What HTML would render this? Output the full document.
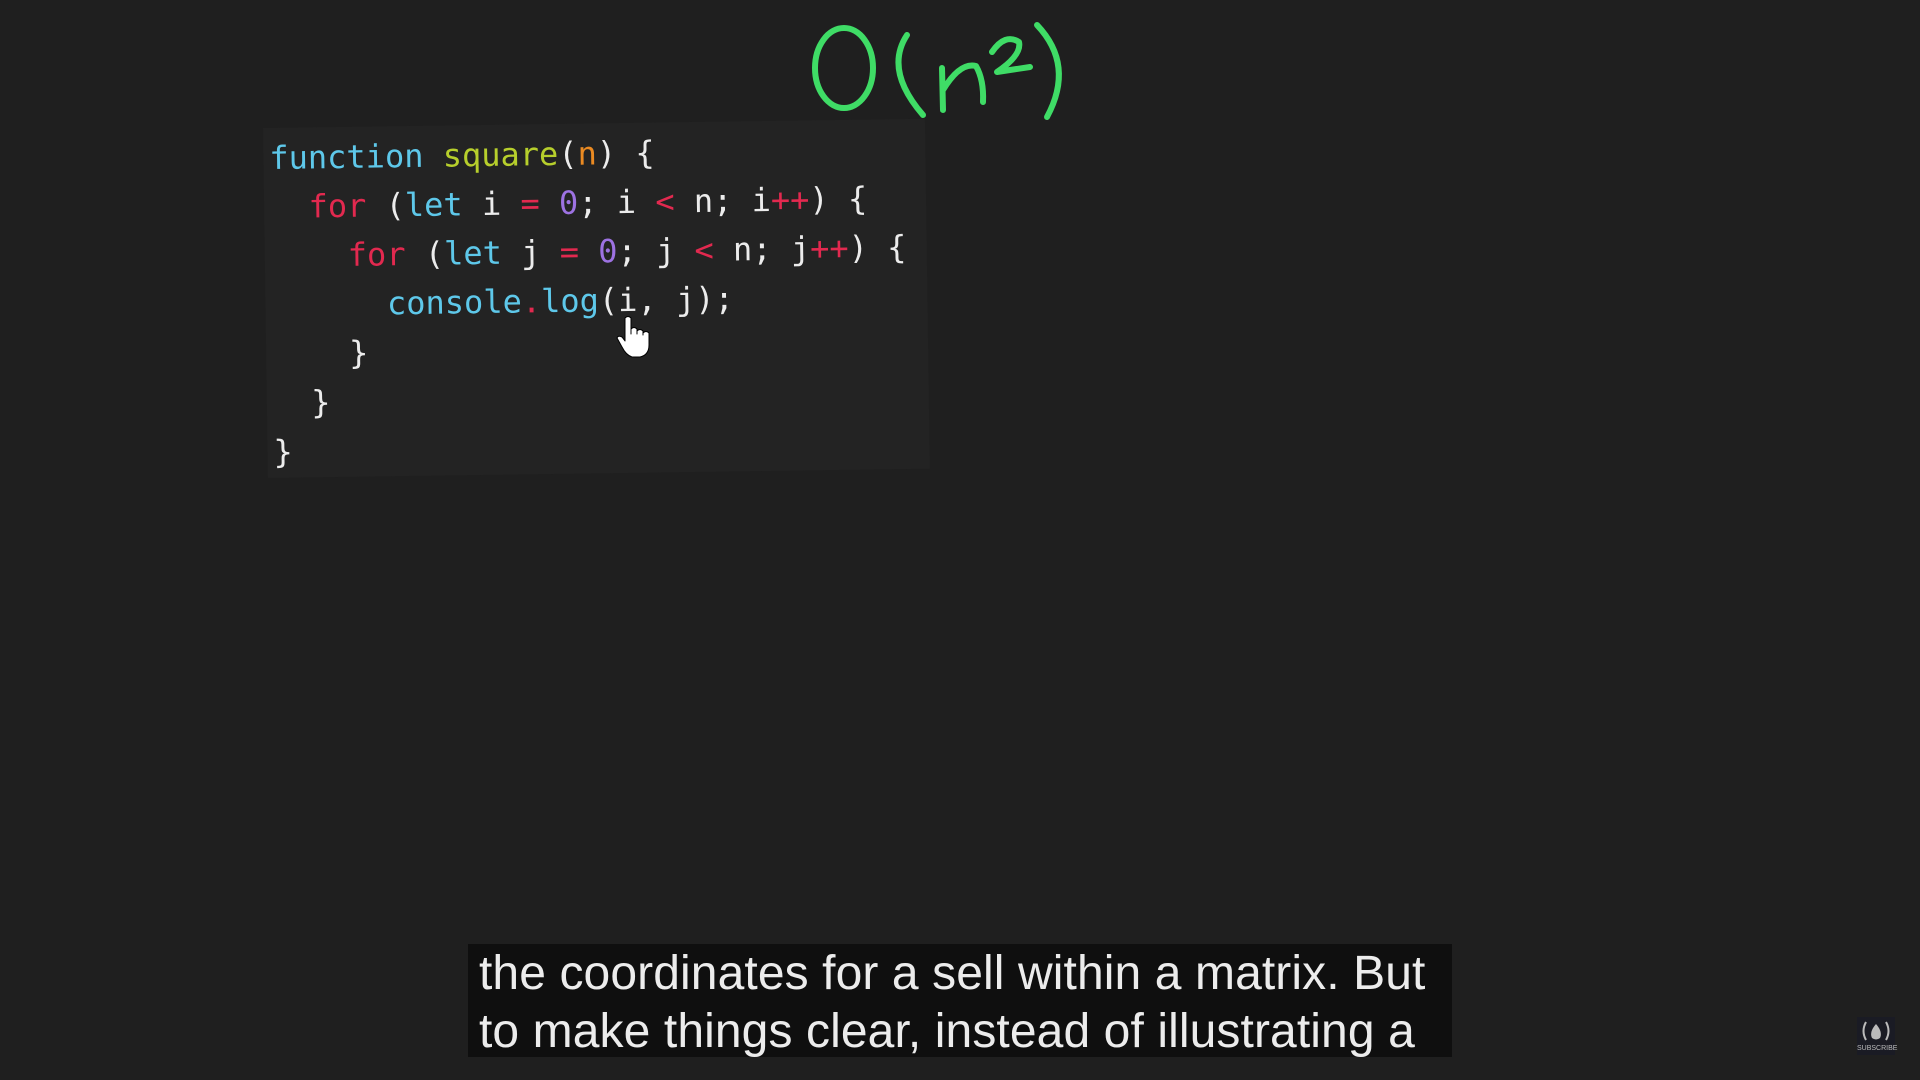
<!DOCTYPE html>
<html><head><meta charset="utf-8"><style>
html,body{margin:0;padding:0;width:1920px;height:1080px;background:#1f1f1f;overflow:hidden;position:relative;font-family:"Liberation Sans",sans-serif}
#panel{position:absolute;left:263px;top:128px;width:662px;height:350px;background:#232323;transform:rotate(-0.8deg);transform-origin:0 0}
#code{position:absolute;left:269px;top:134px;font-family:"DejaVu Sans Mono","Liberation Mono",monospace;font-size:32px;line-height:49px;color:#ececec;white-space:pre;transform:rotate(-0.8deg);transform-origin:0 0}
.c{color:#5ec8ea}.y{color:#b7cf2c}.o{color:#ea8a22}.r{color:#e2294f}.p{color:#9d72e2}
#sub{position:absolute;left:468px;top:944px;width:984px;height:113px;background:#0f0f0f}
#sub div{position:absolute;left:11px;color:#ececec;font-size:48px;letter-spacing:0.1px;white-space:nowrap;line-height:56px}
</style></head><body>
<div id="panel"></div>
<div id="code"><span class="c">function</span> <span class="y">square</span>(<span class="o">n</span>) {
  <span class="r">for</span> (<span class="c">let</span> i <span class="r">=</span> <span class="p">0</span>; i <span class="r">&lt;</span> n; i<span class="r">++</span>) {
    <span class="r">for</span> (<span class="c">let</span> j <span class="r">=</span> <span class="p">0</span>; j <span class="r">&lt;</span> n; j<span class="r">++</span>) {
      <span class="c">console</span><span class="r">.</span><span class="c">log</span>(i, j);
    }
  }
}</div>
<svg width="1920" height="1080" style="position:absolute;left:0;top:0" fill="none" stroke="#3fdc66" stroke-width="6" stroke-linecap="round" stroke-linejoin="round">
<ellipse cx="844" cy="68" rx="29" ry="40"/>
<path d="M907 35 Q884 70 923 115"/>
<path d="M942 68 L943 110 M943 90 Q960 62 976 66 Q984 80 983 102"/>
<path d="M992 52 Q1005 33 1019 42 Q1022 55 997 72 L1030 67"/>
<path d="M1037 25 Q1075 65 1047 117"/>
<g stroke="none" fill="#fff"><path d="M625 318 q3-3 6 0 l0 16 l0-5 q3-3 6 0 l0 5 l0-3 q3-3 6 0 l0 4 l0-2 q3-3 6 0 l0 12 q0 10-9 12 l-8 0 q-6-2-10-10 l-5-9 q1-3 5-1 l3 4 z" stroke="#000" stroke-width="1"/></g>
</svg>
<div id="sub"><div style="top:2px">the coordinates for a sell within a matrix. But</div><div style="top:60px">to make things clear, instead of illustrating a</div></div>
<div style="position:absolute;left:1857px;top:1017px;width:38px;height:38px;background:#1a1b24;color:#bbb;font-size:7px;text-align:center">
<svg width="38" height="28" viewBox="0 0 38 28" fill="none" stroke="#bbb" stroke-width="2"><path d="M9 5 Q4 14 9 23"/><path d="M29 5 Q34 14 29 23"/><path d="M19 7 Q12 15 15 21 Q19 24 23 21 Q26 15 19 7 Z" fill="#bbb" stroke="none"/></svg>
<div style="margin-top:-2px">SUBSCRIBE</div></div>
</body></html>
